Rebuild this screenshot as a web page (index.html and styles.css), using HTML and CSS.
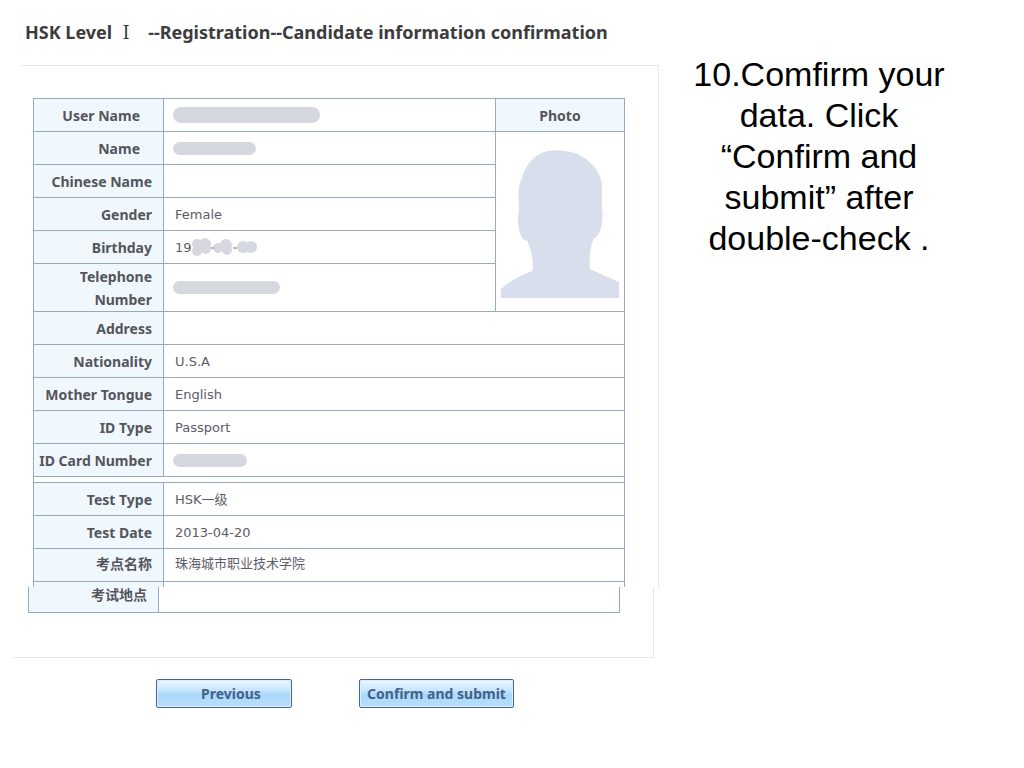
FILE: index.html
```html
<!DOCTYPE html>
<html lang="en">
<head>
<meta charset="utf-8">
<title>HSK Registration</title>
<link rel="stylesheet" href="styles.css">
</head>
<body>
<div class="slide">
  <main class="form">
    <h1 class="title">HSK Level<span class="numeral">Ⅰ</span>--Registration--Candidate information confirmation</h1>
    <section class="panel">
      <table class="data">
        <colgroup><col class="col-label"><col><col class="col-photo"></colgroup>
        <tr><th scope="row" class="inset">User Name</th><td><span class="mask mask-user"></span></td><th class="photo-head" scope="col">Photo</th></tr>
        <tr><th scope="row" class="inset">Name</th><td><span class="mask mask-name"></span></td>
          <td class="photo" rowspan="5">
            <svg class="silhouette" viewBox="0 0 117 147" role="img" aria-label="Photo placeholder"><path d="M47 1Q57-1 69 2C84 5 98 19 100 33V57Q102 66 99 78Q97 85 92 88Q87 98 88 118L117 131V147H0V138Q10 128 31 120Q33 105 26 90Q21 90 19 83Q15 70 18 60Q16 37 20 30Q27 5 47 1Z"/></svg>
          </td></tr>
        <tr><th scope="row">Chinese Name</th><td></td></tr>
        <tr><th scope="row">Gender</th><td>Female</td></tr>
        <tr><th scope="row">Birthday</th><td><span class="birthday">19<svg class="blobs" viewBox="0 0 66 18"><g><circle cx="5" cy="6" r="5"/><circle cx="5" cy="13" r="5"/><circle cx="13" cy="6" r="6"/><circle cx="14" cy="11" r="5"/><circle cx="26" cy="10" r="5"/><circle cx="34" cy="7" r="6"/><circle cx="35" cy="12" r="5"/><circle cx="51" cy="9" r="6"/><circle cx="59" cy="9" r="6"/></g><path d="M19 10H22M41 10H45"/></svg></span></td></tr>
        <tr class="tall"><th scope="row">Telephone Number</th><td><span class="mask mask-phone"></span></td></tr>
        <tr><th scope="row">Address</th><td colspan="2"></td></tr>
        <tr><th scope="row">Nationality</th><td colspan="2">U.S.A</td></tr>
        <tr><th scope="row">Mother Tongue</th><td colspan="2">English</td></tr>
        <tr><th scope="row">ID Type</th><td colspan="2">Passport</td></tr>
        <tr><th scope="row">ID Card Number</th><td colspan="2"><span class="mask mask-id"></span></td></tr>
        <tr class="divider"><td colspan="3"></td></tr>
        <tr><th scope="row">Test Type</th><td colspan="2">HSK一级</td></tr>
        <tr><th scope="row">Test Date</th><td colspan="2">2013-04-20</td></tr>
        <tr class="site"><th scope="row" lang="zh">考点名称</th><td colspan="2" lang="zh">珠海城市职业技术学院</td></tr>
        <tr class="stub"><td class="tint"></td><td colspan="2"></td></tr>
      </table>
    </section>
    <section class="panel panel-end">
      <table class="data data-end">
        <colgroup><col class="col-label"><col></colgroup>
        <tr><th scope="row" lang="zh">考试地点</th><td></td></tr>
      </table>
    </section>
    <div class="actions">
      <button type="button" class="button previous">Previous</button>
      <button type="button" class="button submit">Confirm and submit</button>
    </div>
  </main>
  <aside class="note">
    <p>10.Comfirm your data. Click “Confirm and submit” after double-check .</p>
  </aside>
</div>
</body>
</html>
```
FILE: styles.css
```css
* { box-sizing: border-box; }

body {
  margin: 0;
  background: #fff;
  color: #5c5c66;
  font: 13px/23px "DejaVu Sans", "Noto Sans CJK SC", sans-serif;
}

.slide {
  display: grid;
  grid-template-columns: 659fr 365fr;
}

.title {
  margin: 0;
  padding: 20px 0 20px 25px;
  color: #3c3c3f;
  font: bold 18px/24px "Noto Sans", "Noto Sans CJK SC", sans-serif;
  white-space: nowrap;
}

.numeral {
  display: inline-block;
  width: 36px;
  padding-right: 8px;
  font: 18px/24px "DejaVu Serif", serif;
  text-align: center;
}

.panel {
  margin-left: 21px;
  padding: 32px 33px 0 12px;
  border: 1px solid #e6e7e9;
  border-width: 1px 1px 0 0;
}

.panel-end {
  margin: 0 5px 0 13px;
  padding: 0 33px 44px 15px;
  border-width: 0 1px 1px 0;
}

.data {
  width: 100%;
  border-collapse: collapse;
  table-layout: fixed;
}

.col-label { width: 130px; }
.col-photo { width: 129px; }

.data tr { height: 33px; }
.data .tall { height: 48px; }
.data .divider { height: 6px; }
.data .stub { height: 5px; }

.data th,
.data td {
  padding: 0 11px;
  border: 1px solid #92aac3;
  text-align: left;
}

.data th {
  padding: 0 11px 0 0;
  background: #f0f8fe;
  color: #55555c;
  font: bold 14px/23px "Noto Sans", "Noto Sans CJK SC", sans-serif;
  text-align: right;
}

.data .inset { padding-right: 23px; }
.data .photo-head { padding: 0; text-align: center; }
.data .photo { padding: 10px 5px 5px; }
.data .divider td,
.data .stub td { padding: 0; line-height: 0; }
.data .stub td { border-bottom: 0; }
.data .tint { background: #f0f8fe; }
.data .site th,
.data .site td { padding-bottom: 4px; }

.data-end tr { height: 26px; }
.data-end th,
.data-end td { border-top: 0; }
.data-end tr th { vertical-align: top; line-height: 16px; }

.silhouette { display: block; width: 100%; fill: #d9deec; }

.mask {
  display: block;
  height: 13px;
  margin-left: -2px;
  border-radius: 8px;
  background: #d5d8df;
}

.mask-user { width: 147px; height: 16px; }
.mask-name { width: 83px; }
.mask-phone { width: 107px; }
.mask-id { width: 74px; }

.birthday { display: flex; align-items: center; }
.blobs { width: 66px; height: 18px; fill: #d5d8df; stroke: none; }
.blobs path { stroke: #77777e; }

.actions {
  display: flex;
  gap: 67px;
  padding: 21px 0 0 156px;
}

.button {
  height: 29px;
  padding: 0;
  border: 1px solid #47688f;
  border-radius: 2px;
  background: linear-gradient(#eef8ff, #c5e4fc 40%, #a8d8fc 55%, #b9dffc);
  box-shadow: inset 0 0 0 1px #d8eefe;
  color: #42628a;
  font: bold 14px/23px "Noto Sans", sans-serif;
}

.previous { width: 136px; padding-left: 14px; }
.submit { width: 155px; }

.note {
  padding: 54px 68px 0 23px;
  color: #000;
  font: 34px/41px "Liberation Sans", sans-serif;
  text-align: center;
}

.note p { margin: 0; }
```
